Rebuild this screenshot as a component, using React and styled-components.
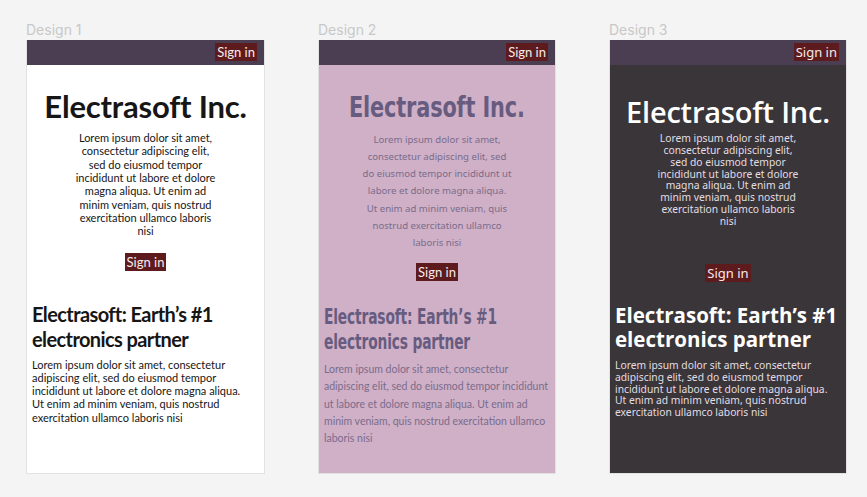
import React from "react";
import styled, { createGlobalStyle } from "styled-components";

const GlobalStyle = createGlobalStyle`
  html, body {
    margin: 0;
    padding: 0;
    background: #f4f4f4;
  }
  * { box-sizing: border-box; }
`;

/* the three design variants, side by side */
const designs = [
  {
    name: "Design 1",
    bg: "#ffffff",
    text: "#161616",
    titleFont: "Lato, sans-serif",
    titleSize: 31,
    titleWeight: 700,
    titleTop: 23,
    titleSquash: 1,
    bodyFont: "Lato, sans-serif",
    heroFont: "Lato, sans-serif",
    heroSize: 11,
    heroLine: 13.3,
    heroWidth: 140,
    heroGap: 6,
    buttonGap: 15,
    headingFont: "Lato, sans-serif",
    headingSize: 20,
    headingTrack: -0.6,
    headingLine: 25,
    headingGap: 31,
    bodySize: 11,
    bodyLine: 13.3,
    bodyGap: 6,
    bodyRight: 22,
    muted: "#161616",
  },
  {
    name: "Design 2",
    bg: "#cfb0c7",
    text: "#675c80",
    titleFont: "'DejaVu Sans Condensed', sans-serif",
    titleSize: 29,
    titleWeight: 700,
    titleTop: 25,
    titleSquash: 0.8,
    bodyFont: "Lato, sans-serif",
    heroFont: "'Noto Sans', sans-serif",
    heroSize: 9.6,
    heroLine: 17.2,
    heroWidth: 149,
    heroGap: 6,
    buttonGap: 12,
    headingFont: "'DejaVu Sans Condensed', sans-serif",
    headingSize: 21,
    headingSquash: 0.73,
    headingTrack: -0.2,
    headingLine: 25,
    headingGap: 24,
    bodySize: 10.5,
    bodyLine: 17.2,
    bodyGap: 6,
    bodyRight: 5,
    muted: "#7a6c8c",
  },
  {
    name: "Design 3",
    bg: "#3a3539",
    text: "#ffffff",
    titleFont: "'Open Sans', sans-serif",
    titleSize: 29,
    titleWeight: 600,
    titleTop: 30,
    titleSquash: 1,
    bodyFont: "'Noto Sans', sans-serif",
    heroFont: "'Noto Sans', sans-serif",
    heroSize: 10.3,
    heroLine: 11.9,
    heroWidth: 148,
    heroGap: 3,
    buttonGap: 36,
    headingFont: "'Open Sans', sans-serif",
    headingSize: 20.5,
    headingTrack: 0,
    headingLine: 24,
    headingGap: 21,
    bodySize: 10.3,
    bodyLine: 11.8,
    bodyGap: 9,
    bodyRight: 5,
    muted: "#e2dee2",
  },
];

const Canvas = styled.div`
  display: flex;
  gap: 53px;
  padding: 21px 0 0 26px;
`;

const Column = styled.div`
  display: flex;
  flex-direction: column;
  width: ${(p) => (p.$first ? 239 : 238)}px;
`;

const Label = styled.div`
  font-family: Inter, sans-serif;
  font-size: 14px;
  line-height: 17px;
  color: #c8c8c8;
  margin-bottom: 2px;
`;

const Frame = styled.div`
  height: 434px;
  background: ${(p) => p.$d.bg};
  border: 1px solid #e2e2e2;
  border-top: none;
  display: flex;
  flex-direction: column;
  overflow: hidden;
`;

const TopBar = styled.div`
  height: 25px;
  background: #4b3e52;
  display: flex;
  justify-content: flex-end;
  align-items: flex-start;
  padding: 3px 7px 0 0;
`;

const SignIn = styled.div`
  background: #5e1b1e;
  color: #f6eaea;
  font-family: ${(p) => p.$font};
  font-size: 13px;
  line-height: 18px;
  height: 18px;
  padding: 0 2px;
  white-space: nowrap;
`;

const Hero = styled.div`
  display: flex;
  flex-direction: column;
  align-items: center;
  padding-top: ${(p) => p.$d.titleTop}px;
`;

const Title = styled.h1`
  margin: 0;
  font-family: ${(p) => p.$d.titleFont};
  font-size: ${(p) => p.$d.titleSize}px;
  font-weight: ${(p) => p.$d.titleWeight};
  line-height: 1.2;
  color: ${(p) => p.$d.text};
  white-space: nowrap;
  letter-spacing: -0.2px;
  transform: scaleX(${(p) => p.$d.titleSquash});
`;

const Lead = styled.p`
  margin: ${(p) => p.$d.heroGap}px 0 0;
  width: ${(p) => p.$d.heroWidth}px;
  text-align: center;
  font-family: ${(p) => p.$d.heroFont};
  font-size: ${(p) => p.$d.heroSize}px;
  line-height: ${(p) => p.$d.heroLine}px;
  color: ${(p) => p.$d.muted};
`;

const HeroButton = styled(SignIn)`
  margin-top: ${(p) => p.$gap}px;
`;

const Section = styled.div`
  padding: ${(p) => p.$d.headingGap}px ${(p) => p.$d.bodyRight}px 0 5px;
`;

/* condensed headings are squashed from the left edge */
const Heading = styled.h2`
  margin: 0;
  font-family: ${(p) => p.$d.headingFont};
  font-size: ${(p) => p.$d.headingSize}px;
  font-weight: 700;
  line-height: ${(p) => p.$d.headingLine}px;
  letter-spacing: ${(p) => p.$d.headingTrack}px;
  color: ${(p) => p.$d.text};
  white-space: nowrap;
  transform-origin: left top;
  transform: scaleX(${(p) => p.$d.headingSquash || 1});
`;

const Body = styled.p`
  margin: ${(p) => p.$d.bodyGap}px 0 0;
  font-family: ${(p) => p.$d.bodyFont};
  font-size: ${(p) => p.$d.bodySize}px;
  line-height: ${(p) => p.$d.bodyLine}px;
  color: ${(p) => p.$d.muted};
`;

const lorem =
  "Lorem ipsum dolor sit amet, consectetur adipiscing elit, sed do eiusmod tempor incididunt ut labore et dolore magna aliqua. Ut enim ad minim veniam, quis nostrud exercitation ullamco laboris nisi";

function Mockup({ d, first }) {
  return (
    <Column $first={first}>
      <Label>{d.name}</Label>
      <Frame $d={d}>
        <TopBar>
          <SignIn $font={d.bodyFont}>Sign in</SignIn>
        </TopBar>
        <Hero $d={d}>
          <Title $d={d}>Electrasoft Inc.</Title>
          <Lead $d={d}>{lorem}</Lead>
          <HeroButton $font={d.bodyFont} $gap={d.buttonGap}>
            Sign in
          </HeroButton>
        </Hero>
        <Section $d={d}>
          <Heading $d={d}>
            Electrasoft: Earth’s #1
            <br />
            electronics partner
          </Heading>
          <Body $d={d}>{lorem}</Body>
        </Section>
      </Frame>
    </Column>
  );
}

export default function App() {
  return (
    <>
      <GlobalStyle />
      <Canvas>
        {designs.map((d, i) => (
          <Mockup key={d.name} d={d} first={i === 0} />
        ))}
      </Canvas>
    </>
  );
}
